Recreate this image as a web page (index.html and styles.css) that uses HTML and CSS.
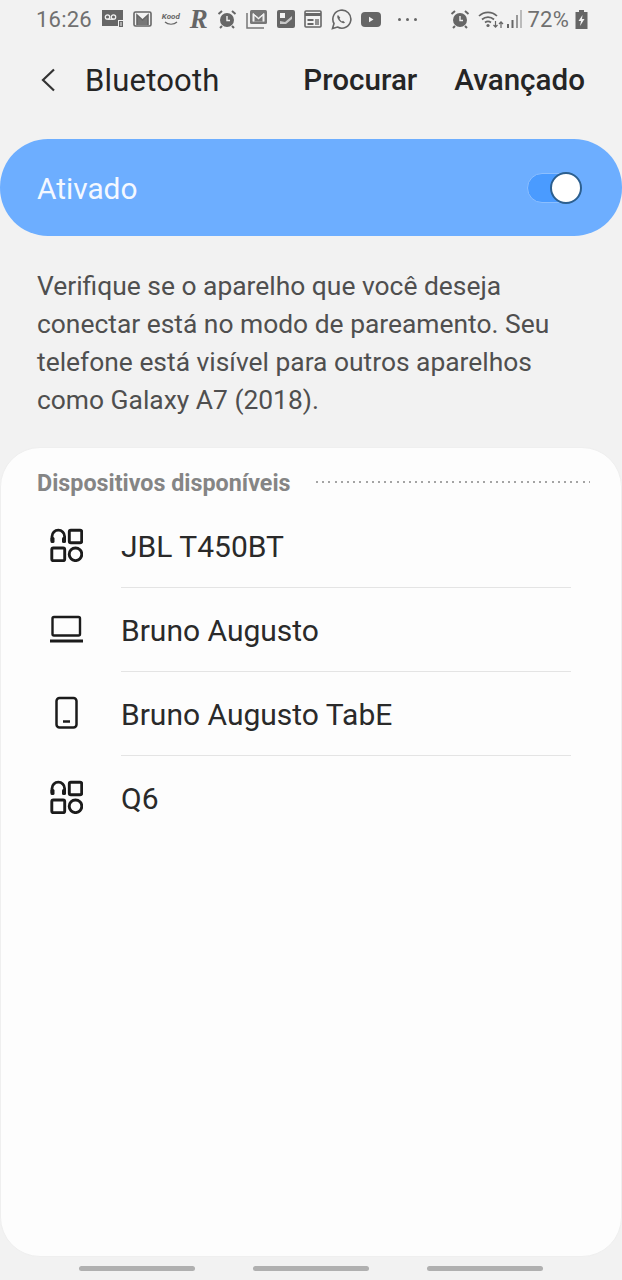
FILE: index.html
```html
<!DOCTYPE html>
<html lang="pt-BR">
<head>
  <meta charset="UTF-8">
  <meta name="viewport" content="width=device-width, initial-scale=1.0">
  <title>Bluetooth</title>
  <link rel="stylesheet" href="styles.css">
</head>
<body>
  <svg width="0" height="0" class="defs">
    <symbol id="icon-other" viewBox="0 0 34 34">
      <path d="M3 13V8.500a6.300 6.300 0 0 1 12.600 0V13" fill="none" stroke="currentColor" stroke-width="2.800"/>
      <rect x="1.500" y="9" width="4" height="6" rx="1.500" fill="currentColor"/>
      <rect x="13" y="9" width="4" height="6" rx="1.500" fill="currentColor"/>
      <rect x="20.300" y="2.300" width="12.400" height="12.400" rx="1.500" fill="none" stroke="currentColor" stroke-width="2.900"/>
      <rect x="2.800" y="20" width="12.900" height="12.700" rx="1.500" fill="none" stroke="currentColor" stroke-width="2.900"/>
      <circle cx="26.500" cy="26.300" r="6.300" fill="none" stroke="currentColor" stroke-width="2.900"/>
    </symbol>
    <symbol id="icon-alarm" viewBox="0 0 20 20">
      <circle cx="10" cy="11" r="7" fill="#666"/>
      <path d="M10 7v4.500h3" fill="none" stroke="#f2f2f2" stroke-width="1.400"/>
      <path d="M1.500 5 5 2M18.500 5 15 2M5 17l-2 2M15 17l2 2" stroke="#666" stroke-width="2"/>
    </symbol>
  </svg>

  <div class="statusbar">
    <div class="status-left">
      <span class="clock">16:26</span>
      <svg class="si" width="22" height="18" viewBox="0 0 22 18"><path d="M0 0h21v11h1v7H16v-2H0z" fill="#666"/><circle cx="5.500" cy="7" r="2.200" fill="none" stroke="#f2f2f2" stroke-width="1.300"/><circle cx="11.500" cy="7" r="2.200" fill="none" stroke="#f2f2f2" stroke-width="1.300"/><path d="M5.500 9.200h6" stroke="#f2f2f2" stroke-width="1.300"/><rect x="16" y="10" width="6" height="8" fill="#f2f2f2"/><rect x="17" y="11" width="4" height="6" fill="#666"/><path d="M19 12v4" stroke="#f2f2f2"/></svg>
      <svg class="si" width="19" height="16" viewBox="0 0 19 16"><rect x="1" y="1" width="17" height="14" rx="1.500" fill="#f2f2f2" stroke="#666" stroke-width="1.600"/><path d="M4 14V4l5.500 5L15 4v10" fill="#777" stroke="#666" stroke-width="1.600"/></svg>
      <span class="si-word">Kood<svg width="14" height="4" viewBox="0 0 14 4"><path d="M1 1c3 3 9 3 12 0" fill="none" stroke="#666" stroke-width="1.200"/></svg></span>
      <span class="si-r">R</span>
      <svg class="si" width="20" height="20"><use href="#icon-alarm"/></svg>
      <svg class="si" width="22" height="20" viewBox="0 0 22 20"><path d="M1 4v15h17" fill="none" stroke="#777" stroke-width="1.500"/><rect x="4" y="1" width="17" height="14" rx="1.500" fill="#777"/><path d="M7 12.500V4.500l5.500 4.500 5.500-4.500v8" fill="#f2f2f2" stroke="#f2f2f2" stroke-width="1"/><path d="M8.500 12.500V7l4 3.500 4-3.500v5.500z" fill="#777"/></svg>
      <svg class="si" width="18" height="18" viewBox="0 0 18 18"><rect width="18" height="18" rx="2" fill="#666"/><rect x="3" y="3" width="5" height="5" fill="#f2f2f2"/><path d="M3 11l5 1 7-6v3l-6 5H3z" fill="#f2f2f2" opacity=".7"/></svg>
      <svg class="si" width="18" height="18" viewBox="0 0 18 18"><rect x="1" y="1" width="16" height="16" rx="1" fill="none" stroke="#666" stroke-width="1.600"/><path d="M1 4.500h16" stroke="#666" stroke-width="3"/><path d="M3.500 9h6v2h-6zM3.500 13h6v2h-6z" fill="#666"/><path d="M11 9h4v6h-4z" fill="#666" opacity=".7"/></svg>
      <svg class="si" width="21" height="21" viewBox="0 0 21 21"><path d="M1.500 19.500 3 14.500A9 9 0 1 1 6.500 18z" fill="none" stroke="#666" stroke-width="1.600"/><path d="M7 6c-1.500 1-.5 4 1.500 6s4.500 2.800 5.500 1.500l-2-1.800-1 .7c-1-.5-2-1.500-2.500-2.700l.8-1z" fill="#666"/></svg>
      <svg class="si" width="20" height="15" viewBox="0 0 20 15"><rect width="20" height="15" rx="4" fill="#666"/><path d="M8 4.700v5.600L12.500 7.500z" fill="#f2f2f2"/></svg>
      <span class="si-more"><i></i><i></i><i></i></span>
    </div>
    <div class="status-right">
      <svg class="si" width="20" height="20"><use href="#icon-alarm"/></svg>
      <svg class="si wifi" width="27" height="20" viewBox="0 0 27 20"><path d="M1 7a13 13 0 0 1 18 0M4 10.500a9 9 0 0 1 12 0M7 13.500a5 5 0 0 1 6 0" fill="none" stroke="#666" stroke-width="1.700"/><circle cx="10" cy="16.500" r="1.600" fill="#666"/><path d="M17.500 12v6M15.500 16l2 2.200 2-2.200M23 19v-6M21 15l2-2.200 2 2.200" fill="none" stroke="#666" stroke-width="1.200"/></svg>
      <svg class="si" width="15" height="18" viewBox="0 0 15 18"><rect x="0" y="14" width="2" height="4" fill="#666"/><rect x="4.500" y="10" width="2" height="8" fill="#666"/><rect x="9" y="5" width="2" height="13" fill="#999"/><rect x="13" y="0" width="2" height="18" fill="#bbb"/></svg>
      <span class="battery-pct">72%</span>
      <svg class="si" width="13" height="19" viewBox="0 0 13 19"><path d="M4 0h5v2h3.500v17H.5V2H4z" fill="#666"/><path d="M7.500 5 3.500 11H6l-1 5 4.500-7H7z" fill="#f2f2f2"/></svg>
    </div>
  </div>

  <header class="topbar">
    <div class="title-group">
      <svg class="back" width="16" height="24" viewBox="0 0 16 24"><path d="M14 1.500 3 12l11 10.500" fill="none" stroke="#333" stroke-width="2.200"/></svg>
      <h1>Bluetooth</h1>
    </div>
    <nav class="actions">
      <a>Procurar</a>
      <a>Avançado</a>
    </nav>
  </header>

  <section class="master">
    <span class="master-label">Ativado</span>
    <div class="switch"><div class="knob"></div></div>
  </section>

  <p class="hint">Verifique se o aparelho que você deseja conectar está no modo de pareamento. Seu telefone está visível para outros aparelhos como Galaxy A7 (2018).</p>

  <main class="card">
    <div class="section-head">
      <h2>Dispositivos disponíveis</h2>
      <div class="dots"></div>
    </div>
    <ul class="devices">
      <li>
        <svg class="dev-icon" width="34" height="34"><use href="#icon-other"/></svg>
        <span class="name">JBL T450BT</span>
      </li>
      <li>
        <svg class="dev-icon" width="34" height="34" viewBox="0 0 34 34"><rect x="3.500" y="5" width="27.500" height="18.500" rx="1.500" fill="none" stroke="currentColor" stroke-width="2.400"/><path d="M1 29h33" stroke="currentColor" stroke-width="2.800"/></svg>
        <span class="name">Bruno Augusto</span>
      </li>
      <li>
        <svg class="dev-icon" width="34" height="34" viewBox="0 0 34 34"><rect x="7.500" y="2" width="20" height="29.500" rx="3" fill="none" stroke="currentColor" stroke-width="2.500"/><path d="M14 25.500h7" stroke="currentColor" stroke-width="2.500"/></svg>
        <span class="name">Bruno Augusto TabE</span>
      </li>
      <li>
        <svg class="dev-icon" width="34" height="34"><use href="#icon-other"/></svg>
        <span class="name">Q6</span>
      </li>
    </ul>
  </main>

  <div class="navbar">
    <span></span><span></span><span></span>
  </div>
</body>
</html>
```

FILE: styles.css
```css
* {
  box-sizing: border-box;
}

body {
  margin: 0;
  width: 622px;
  height: 1280px;
  overflow: hidden;
  background-color: #f2f2f2;
  font-family: Roboto, "Liberation Sans", sans-serif;
  color: #252525;
}

.defs {
  display: block;
  height: 0;
}

.statusbar {
  height: 38px;
  padding: 0 34px 0 36px;
  display: flex;
  justify-content: space-between;
  align-items: center;
  color: #6b6b6b;
}

.status-left,
.status-right {
  display: flex;
  align-items: center;
}

.status-left {
  gap: 9px;
}

.status-right {
  gap: 6px;
}

.clock,
.battery-pct {
  font-size: 22px;
  letter-spacing: 0.2px;
  color: #707070;
}

.clock {
  margin-right: 1px;
}

.si {
  flex: none;
}

.wifi {
  margin-left: 2px;
  margin-right: -4px;
}

.si-word {
  width: 20px;
  display: flex;
  flex-direction: column;
  align-items: center;
  font-size: 8px;
  line-height: 8px;
  font-weight: 700;
  font-style: italic;
  color: #666;
}

.si-word svg {
  display: block;
}

.si-r {
  width: 18px;
  font-family: "Liberation Serif", serif;
  font-size: 27px;
  font-style: italic;
  font-weight: 700;
  line-height: 1;
  color: #666;
}

.si-more {
  margin-left: 8px;
  margin-right: 22px;
  display: flex;
  gap: 5px;
}

.si-more i {
  width: 3px;
  height: 3px;
  border-radius: 50%;
  background: #666;
}

.topbar {
  height: 62px;
  padding: 22px 37px 0 40px;
  display: flex;
  justify-content: space-between;
  align-items: center;
}

.title-group {
  display: flex;
  align-items: center;
  gap: 29px;
}

h1 {
  margin: 0;
  font-size: 31px;
  font-weight: 400;
  letter-spacing: 0.2px;
}

.actions {
  display: flex;
  gap: 37px;
  font-size: 29.600px;
  font-weight: 500;
}

.master {
  margin-top: 39px;
  height: 97px;
  padding: 0 41px 0 37px;
  border-radius: 48px;
  background-color: #6daeff;
  color: #f4f8ff;
  font-size: 29.800px;
  display: flex;
  justify-content: space-between;
  align-items: center;
}

.master-label {
  padding-top: 2px;
}

.switch {
  position: relative;
  width: 54px;
  height: 30px;
  border-radius: 15px;
  background: #4a9bff;
  border: 1px solid #8cbfff;
}

.knob {
  position: absolute;
  right: -2px;
  top: -2px;
  width: 32px;
  height: 32px;
  border-radius: 50%;
  background: #fff;
  border: 2px solid #2c5f8f;
}

.hint {
  margin: 31px 37px 0;
  font-size: 26.400px;
  line-height: 38px;
  color: #4f4f4f;
}

.card {
  margin-top: 28px;
  height: 810px;
  padding-top: 21px;
  border-radius: 40px;
  background-color: #fdfdfd;
  border: 1px solid #efefef;
}

.section-head {
  padding: 0 31px 0 36px;
  display: flex;
  align-items: center;
  gap: 25px;
}

h2 {
  margin: 0;
  font-size: 23.300px;
  font-weight: 700;
  color: #858585;
  white-space: nowrap;
}

.dots {
  flex: 1;
  height: 2px;
  margin-top: -3px;
  background: repeating-linear-gradient(to right, #a4a4a4 0 2px, transparent 2px 6.200px);
}

.devices {
  list-style: none;
  margin: 6px 0 0;
  padding: 0;
}

.devices li {
  position: relative;
  height: 84px;
  padding-left: 48px;
  display: flex;
  align-items: center;
  gap: 38px;
}

.devices li + li::before {
  content: "";
  position: absolute;
  left: 120px;
  right: 50px;
  top: 0;
  border-top: 1px solid #e4e4e4;
}

.dev-icon {
  flex: none;
  color: #1b1b1b;
}

.name {
  padding-top: 2px;
  font-size: 30px;
  color: #2a2a2a;
}

.navbar {
  margin-top: 9px;
  display: flex;
  justify-content: center;
  gap: 58px;
}

.navbar span {
  width: 116px;
  height: 5px;
  border-radius: 3px;
  background: #b0b0b0;
}
```
